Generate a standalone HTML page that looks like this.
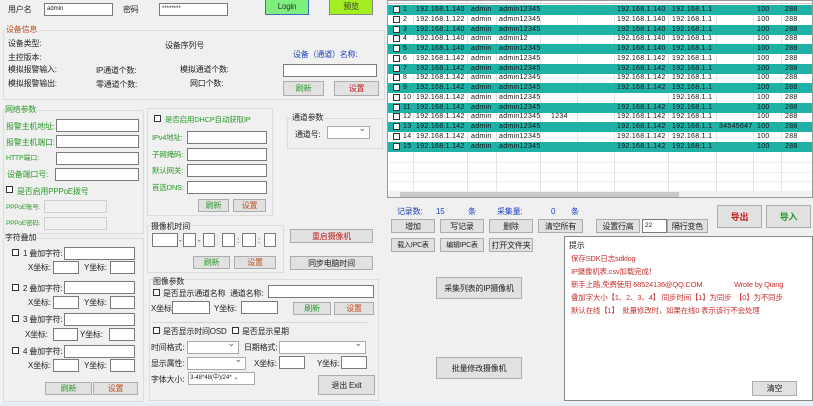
<!DOCTYPE html>
<html><head><meta charset="utf-8"><style>
*{box-sizing:border-box;margin:0;padding:0}
body{width:813px;height:406px;background:#f0f0f0;position:relative;overflow:hidden;font-family:"Liberation Sans","Noto Sans CJK SC",sans-serif;font-size:8px;color:#222}
.t{position:absolute;white-space:nowrap;line-height:11px;transform:translateY(-5px);letter-spacing:-0.2px}
.i{position:absolute;background:#fff;border:1px solid #7a7a7a}
.d{position:absolute;background:#f0f0f0;border:1px solid #cfcfcf}
.b{position:absolute;background:#e1e1e1;border:1px solid #adadad;text-align:center;font-size:8px;display:flex;align-items:center;justify-content:center;white-space:nowrap;letter-spacing:-0.2px}
.g{position:absolute;border:1px solid #dcdcdc}
.cb{position:absolute;width:7px;height:7px;border:1px solid #333;background:#fff}
.gr{color:#2a9a2a}.og{color:#c05020}.rd{color:#c02020}.bl{color:#2040c0}
.sel::after{content:"⌄";position:absolute;right:3px;top:-4px;font-size:9px;color:#555}
.row{position:absolute;left:0;width:426px;height:10px;font-size:7px;line-height:10px;letter-spacing:0.3px;color:#111}
.row span{position:absolute;top:0;white-space:nowrap}
.teal{background:#1fb0a6}
.hint{position:absolute;left:6px;color:#c83030;font-size:7.5px}
.vl{position:absolute;top:0;width:1px;height:190px;background:#e4e4e4}
</style></head><body>
<div class="t" style="left:8px;top:9px">用户名</div>
<div class="i" style="left:44px;top:3px;width:69px;height:13px;font-size:6px;padding-left:2px;line-height:11px">admin</div>
<div class="t" style="left:123px;top:9px">密码</div>
<div class="i" style="left:159px;top:3px;width:69px;height:13px;font-size:6px;padding-left:2px;line-height:11px">********</div>
<div class="b" style="left:265px;top:-2px;width:44px;height:17px;background:#7fee7f;border-color:#3a6cc0;color:#333">Login</div>
<div class="b" style="left:329px;top:-2px;width:44px;height:17px;background:#a2ee20;border-color:#888;color:#333">预览</div>

<div class="g" style="left:3px;top:30px;width:382px;height:70px"></div>
<div class="t og" style="left:5px;top:29px;background:#f0f0f0;padding:0 1px">设备信息</div>
<div class="t" style="left:8px;top:43px">设备类型:</div>
<div class="t" style="left:165px;top:45px">设备序列号</div>
<div class="t" style="left:8px;top:57px">主控版本:</div>
<div class="t bl" style="left:293px;top:54px">设备（通道）名称:</div>
<div class="t" style="left:8px;top:69px">模拟报警输入:</div>
<div class="t" style="left:96px;top:70px">IP通道个数:</div>
<div class="t" style="left:180px;top:69px">模拟通道个数:</div>
<div class="i" style="left:283px;top:64px;width:94px;height:13px"></div>
<div class="t" style="left:8px;top:83px">模拟报警输出:</div>
<div class="t" style="left:96px;top:84px">零通道个数:</div>
<div class="t" style="left:190px;top:83px">网口个数:</div>
<div class="b gr" style="left:283px;top:81px;width:41px;height:15px">刷新</div>
<div class="b rd" style="left:334px;top:81px;width:45px;height:15px">设置</div>

<div class="g" style="left:3px;top:110px;width:141px;height:124px"></div>
<div class="t gr" style="left:5px;top:109px;background:#f0f0f0">网络参数</div>
<div class="t gr" style="left:6px;top:126px">报警主机地址:</div>
<div class="i" style="left:56px;top:119px;width:83px;height:13px"></div>
<div class="t gr" style="left:6px;top:142px">报警主机端口:</div>
<div class="i" style="left:56px;top:135px;width:83px;height:13px"></div>
<div class="t gr" style="left:6px;top:158px;font-size:7px">HTTP端口:</div>
<div class="i" style="left:56px;top:152px;width:83px;height:13px"></div>
<div class="t gr" style="left:7px;top:174px">设备端口号:</div>
<div class="i" style="left:55px;top:168px;width:84px;height:13px"></div>
<div class="cb" style="left:6px;top:186px"></div>
<div class="t gr" style="left:17px;top:191px">是否启用PPPoE拨号</div>
<div class="t gr" style="left:6px;top:207px;font-size:6.5px">PPPoE账号:</div>
<div class="d" style="left:44px;top:200px;width:63px;height:13px"></div>
<div class="t gr" style="left:6px;top:223px;font-size:6.5px">PPPoE密码:</div>
<div class="d" style="left:44px;top:217px;width:63px;height:13px"></div>

<div class="g" style="left:147px;top:108px;width:126px;height:108px"></div>
<div class="cb" style="left:154px;top:115px"></div>
<div class="t gr" style="left:165px;top:119px;font-size:7.5px">是否启用DHCP自动获取IP</div>
<div class="t gr" style="left:152px;top:137px;font-size:7.5px">IPv4地址:</div>
<div class="i" style="left:187px;top:131px;width:80px;height:13px"></div>
<div class="t gr" style="left:152px;top:154px;font-size:7.5px">子网掩码:</div>
<div class="i" style="left:187px;top:148px;width:80px;height:13px"></div>
<div class="t gr" style="left:152px;top:170px;font-size:7.5px">默认网关:</div>
<div class="i" style="left:187px;top:164px;width:80px;height:13px"></div>
<div class="t gr" style="left:152px;top:187px;font-size:7.5px">首选DNS:</div>
<div class="i" style="left:187px;top:181px;width:80px;height:13px"></div>
<div class="b gr" style="left:198px;top:199px;width:31px;height:13px">刷新</div>
<div class="b og" style="left:233px;top:199px;width:33px;height:13px">设置</div>

<div class="g" style="left:287px;top:118px;width:96px;height:31px"></div>
<div class="t" style="left:292px;top:117px;background:#f0f0f0">通道参数</div>
<div class="t" style="left:295px;top:134px">通道号:</div>
<div class="i sel" style="left:327px;top:126px;width:43px;height:13px;border-color:#aaa"></div>

<div class="g" style="left:3px;top:238px;width:141px;height:164px"></div>
<div class="t" style="left:5px;top:237px;background:#f0f0f0">字符叠加</div>
<div class="cb" style="left:12px;top:249px"></div><div class="t" style="left:23px;top:253px">1 叠加字符:</div>
<div class="i" style="left:64px;top:247px;width:71px;height:13px"></div>
<div class="t" style="left:28px;top:267px">X坐标:</div><div class="i" style="left:53px;top:261px;width:26px;height:13px"></div>
<div class="t" style="left:84px;top:267px">Y坐标:</div><div class="i" style="left:110px;top:261px;width:25px;height:13px"></div>
<div class="cb" style="left:12px;top:284px"></div><div class="t" style="left:23px;top:288px">2 叠加字符:</div>
<div class="i" style="left:64px;top:281px;width:71px;height:13px"></div>
<div class="t" style="left:28px;top:302px">X坐标:</div><div class="i" style="left:53px;top:296px;width:26px;height:13px"></div>
<div class="t" style="left:84px;top:302px">Y坐标:</div><div class="i" style="left:110px;top:296px;width:25px;height:13px"></div>
<div class="cb" style="left:12px;top:315px"></div><div class="t" style="left:23px;top:319px">3 叠加字符:</div>
<div class="i" style="left:64px;top:313px;width:71px;height:13px"></div>
<div class="t" style="left:25px;top:334px">X坐标:</div><div class="i" style="left:53px;top:328px;width:25px;height:13px"></div>
<div class="t" style="left:80px;top:334px">Y坐标:</div><div class="i" style="left:109px;top:328px;width:26px;height:13px"></div>
<div class="cb" style="left:12px;top:347px"></div><div class="t" style="left:23px;top:351px">4 叠加字符:</div>
<div class="i" style="left:64px;top:345px;width:71px;height:13px"></div>
<div class="t" style="left:28px;top:365px">X坐标:</div><div class="i" style="left:53px;top:359px;width:26px;height:13px"></div>
<div class="t" style="left:84px;top:365px">Y坐标:</div><div class="i" style="left:110px;top:359px;width:25px;height:13px"></div>
<div class="b gr" style="left:45px;top:382px;width:47px;height:13px">刷新</div>
<div class="b og" style="left:93px;top:382px;width:45px;height:13px">设置</div>

<div class="g" style="left:147px;top:225px;width:137px;height:48px"></div>
<div class="t" style="left:151px;top:226px;background:#f0f0f0">摄像机时间</div>
<div class="i" style="left:152px;top:233px;width:26px;height:14px"></div><div class="t" style="left:179px;top:240px">-</div>
<div class="i" style="left:183px;top:233px;width:13px;height:14px"></div><div class="t" style="left:198px;top:240px">-</div>
<div class="i" style="left:203px;top:233px;width:12px;height:14px"></div>
<div class="i" style="left:222px;top:233px;width:13px;height:14px"></div><div class="t" style="left:237px;top:240px">:</div>
<div class="i" style="left:242px;top:233px;width:14px;height:14px"></div><div class="t" style="left:258px;top:240px">:</div>
<div class="i" style="left:264px;top:233px;width:12px;height:14px"></div>
<div class="b gr" style="left:193px;top:256px;width:37px;height:13px">刷新</div>
<div class="b og" style="left:234px;top:256px;width:42px;height:13px">设置</div>
<div class="b rd" style="left:290px;top:229px;width:83px;height:14px">重启摄像机</div>
<div class="b" style="left:290px;top:256px;width:83px;height:14px">同步电脑时间</div>

<div class="g" style="left:149px;top:279px;width:230px;height:122px"></div>
<div class="t" style="left:153px;top:281px;background:#f0f0f0">图像参数</div>
<div class="cb" style="left:153px;top:289px"></div><div class="t" style="left:163px;top:293px">是否显示通道名称</div>
<div class="t" style="left:230px;top:293px">通道名称:</div>
<div class="i" style="left:268px;top:285px;width:106px;height:13px"></div>
<div class="t" style="left:151px;top:308px">X坐标:</div><div class="i" style="left:172px;top:301px;width:38px;height:13px"></div>
<div class="t" style="left:214px;top:308px">Y坐标:</div><div class="i" style="left:241px;top:301px;width:37px;height:13px"></div>
<div class="b gr" style="left:293px;top:302px;width:38px;height:13px">刷新</div>
<div class="b og" style="left:334px;top:302px;width:40px;height:13px">设置</div>
<div style="position:absolute;left:152px;top:322px;width:215px;height:1px;background:#d8d8d8"></div>
<div class="cb" style="left:153px;top:327px"></div><div class="t" style="left:163px;top:331px">是否显示时间OSD</div>
<div class="cb" style="left:232px;top:327px"></div><div class="t" style="left:242px;top:331px">是否显示星期</div>
<div class="t" style="left:151px;top:347px">时间格式:</div><div class="i sel" style="left:187px;top:341px;width:52px;height:13px;border-color:#aaa"></div>
<div class="t" style="left:244px;top:347px">日期格式:</div><div class="i sel" style="left:279px;top:341px;width:87px;height:13px;border-color:#aaa"></div>
<div class="t" style="left:151px;top:363px">显示属性:</div><div class="i sel" style="left:187px;top:357px;width:59px;height:13px;border-color:#aaa"></div>
<div class="t" style="left:254px;top:363px">X坐标:</div><div class="i" style="left:279px;top:356px;width:26px;height:13px"></div>
<div class="t" style="left:317px;top:363px">Y坐标:</div><div class="i" style="left:341px;top:356px;width:26px;height:13px"></div>
<div class="t" style="left:151px;top:379px">字体大小:</div>
<div class="i" style="left:188px;top:372px;width:67px;height:13px;border-color:#aaa;font-size:6px;line-height:11px;padding-left:1px;white-space:nowrap;overflow:hidden">3-48*48(中)/24* ⌄</div>
<div class="b" style="left:318px;top:375px;width:57px;height:20px">退出 Exit</div>

<div style="position:absolute;left:387px;top:0;width:426px;height:198px;background:#fff;border:1px solid #999;overflow:hidden">
<div style="position:absolute;left:0;top:0;width:426px;height:3px;border-bottom:1px solid #ccc"></div>
<div class="vl" style="left:25px"></div><div class="vl" style="left:79px"></div><div class="vl" style="left:108px"></div><div class="vl" style="left:152px"></div><div class="vl" style="left:189px"></div><div class="vl" style="left:226px"></div><div class="vl" style="left:280px"></div><div class="vl" style="left:328px"></div><div class="vl" style="left:365px"></div><div class="vl" style="left:393px"></div>
<div id="rows"></div>
<div style="position:absolute;left:0;top:190px;width:426px;height:8px;background:#f0f0f0"></div>
<div style="position:absolute;left:12px;top:191px;width:279px;height:7px;background:#c8c8c8"></div>
</div>

<div class="t bl" style="left:397px;top:211px">记录数:</div>
<div class="t bl" style="left:436px;top:211px">15</div>
<div class="t bl" style="left:468px;top:211px">条</div>
<div class="t bl" style="left:497px;top:211px">采集量:</div>
<div class="t bl" style="left:551px;top:211px">0</div>
<div class="t bl" style="left:571px;top:211px">条</div>
<div class="b" style="left:391px;top:219px;width:44px;height:14px">增加</div>
<div class="b" style="left:440px;top:219px;width:44px;height:14px">写记录</div>
<div class="b" style="left:489px;top:219px;width:44px;height:14px">删除</div>
<div class="b" style="left:538px;top:219px;width:45px;height:14px">清空所有</div>
<div class="b" style="left:596px;top:219px;width:44px;height:14px">设置行高</div>
<div class="i" style="left:642px;top:219px;width:25px;height:14px;font-size:6.5px;padding-left:2px;line-height:12px">22</div>
<div class="b" style="left:667px;top:219px;width:41px;height:14px">隔行变色</div>
<div class="b rd" style="left:717px;top:205px;width:45px;height:23px;font-weight:bold;font-size:9px">导出</div>
<div class="b gr" style="left:766px;top:205px;width:45px;height:23px;font-weight:bold;font-size:9px">导入</div>
<div class="b" style="left:391px;top:238px;width:44px;height:14px;font-size:7px">载入IPC表</div>
<div class="b" style="left:440px;top:238px;width:44px;height:14px;font-size:7px">编辑IPC表</div>
<div class="b" style="left:489px;top:238px;width:44px;height:14px">打开文件夹</div>
<div class="b" style="left:436px;top:277px;width:86px;height:22px">采集列表的IP摄像机</div>
<div class="b" style="left:436px;top:357px;width:86px;height:22px">批量修改摄像机</div>

<div style="position:absolute;left:564px;top:236px;width:249px;height:165px;background:#fff;border:1px solid #888;overflow:hidden">
<div class="t" style="left:4px;top:8px">提示</div>
<div class="t hint" style="top:21px">保存SDK日志sdklog</div>
<div class="t hint" style="top:34px">IP摄像机表.csv加载完成！</div>
<div class="t hint" style="top:47px">新手上路,免费使用 68524136@QQ.COM<span style="position:absolute;left:163px">Wrote by Qiang</span></div>
<div class="t hint" style="top:60px">叠加字大小【1、2、3、4】 同步时间【1】为同步　【0】为不同步</div>
<div class="t hint" style="top:73px">默认在线【1】　批量修改时，如果在线0 表示该行不会处理</div>
<div class="b" style="left:187px;top:144px;width:45px;height:15px">清空</div>
</div>
<div style="position:absolute;left:0;top:403px;width:813px;height:3px;background:#e4eef8"></div>

<script>
var ips=["140","122","140","140","140","142","142","142","142","142","142","142","142","142","142"];
var h="";
for(var k=0;k<15;k++){
 var y=4+k*9.75, t=(k%2==0);
 var pw=k==3?"admin12":"admin12345";
 var ip2=k==9?"":"192.168.1."+(k<5?"140":"142");
 h+='<div class="row'+(t?' teal':'')+'" style="top:'+y+'px">'+
 '<div class="cb" style="left:5px;top:1px"></div>'+
 '<span style="left:15px">'+(k+1)+'</span>'+
 '<span style="left:28px">192.168.1.'+ips[k]+'</span>'+
 '<span style="left:83px">admin</span>'+
 '<span style="left:111px">'+pw+'</span>'+
 (k==11?'<span style="left:163px">1234</span>':'')+
 '<span style="left:229px">'+ip2+'</span>'+
 '<span style="left:284px">192.168.1.1</span>'+
 (k==12?'<span style="left:331px">34545647</span>':'')+
 '<span style="left:369px">100</span>'+
 '<span style="left:397px">288</span></div>';
}
for(var k=0;k<4;k++){h+='<div style="position:absolute;left:0;top:'+(161+k*9.5)+'px;width:426px;height:1px;background:#eee"></div>'}
document.getElementById("rows").innerHTML=h;
</script>
</body></html>
